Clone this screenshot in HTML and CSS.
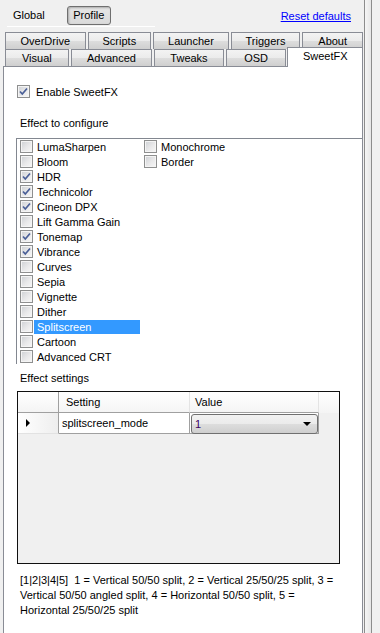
FILE: index.html
```html
<!DOCTYPE html>
<html lang="en">
<head>
    <meta charset="UTF-8">
    <meta name="viewport" content="width=device-width, initial-scale=1.0">
    <title>SweetFX settings</title>
    <link rel="stylesheet" href="styles.css">
</head>
<body>
<div class="window">
    <div class="main">
        <div class="topbar">
            <span class="mode">Global</span>
            <span class="mode active">Profile</span>
            <a href="#" class="reset">Reset defaults</a>
        </div>
        <div class="rule"></div>

        <div class="tabs">
            <div class="tabrow">
                <div class="tab w-overdrive">OverDrive</div>
                <div class="tab w-scripts">Scripts</div>
                <div class="tab w-launcher">Launcher</div>
                <div class="tab w-triggers">Triggers</div>
                <div class="tab w-about">About</div>
            </div>
            <div class="tabrow">
                <div class="tab w-visual">Visual</div>
                <div class="tab w-advanced">Advanced</div>
                <div class="tab w-tweaks">Tweaks</div>
                <div class="tab w-osd">OSD</div>
                <div class="tab w-sweetfx selected">SweetFX</div>
            </div>
        </div>

        <div class="page">
            <label class="enable">
                <span class="cb checked"><svg viewBox="0 0 11 11"><path d="M2 5.5 L4.3 8 L9 2.5"/></svg></span>
                Enable SweetFX
            </label>

            <div class="caption">Effect to configure</div>
            <div class="effects">
                <div class="col col-1">
                    <div class="item"><span class="cb"></span><span class="name">LumaSharpen</span></div>
                    <div class="item"><span class="cb"></span><span class="name">Bloom</span></div>
                    <div class="item"><span class="cb checked"><svg viewBox="0 0 11 11"><path d="M2 5.5 L4.3 8 L9 2.5"/></svg></span><span class="name">HDR</span></div>
                    <div class="item"><span class="cb checked"><svg viewBox="0 0 11 11"><path d="M2 5.5 L4.3 8 L9 2.5"/></svg></span><span class="name">Technicolor</span></div>
                    <div class="item"><span class="cb checked"><svg viewBox="0 0 11 11"><path d="M2 5.5 L4.3 8 L9 2.5"/></svg></span><span class="name">Cineon DPX</span></div>
                    <div class="item"><span class="cb"></span><span class="name">Lift Gamma Gain</span></div>
                    <div class="item"><span class="cb checked"><svg viewBox="0 0 11 11"><path d="M2 5.5 L4.3 8 L9 2.5"/></svg></span><span class="name">Tonemap</span></div>
                    <div class="item"><span class="cb checked"><svg viewBox="0 0 11 11"><path d="M2 5.5 L4.3 8 L9 2.5"/></svg></span><span class="name">Vibrance</span></div>
                    <div class="item"><span class="cb"></span><span class="name">Curves</span></div>
                    <div class="item"><span class="cb"></span><span class="name">Sepia</span></div>
                    <div class="item"><span class="cb"></span><span class="name">Vignette</span></div>
                    <div class="item"><span class="cb"></span><span class="name">Dither</span></div>
                    <div class="item"><span class="cb"></span><span class="name hl">Splitscreen</span></div>
                    <div class="item"><span class="cb"></span><span class="name">Cartoon</span></div>
                    <div class="item"><span class="cb"></span><span class="name">Advanced CRT</span></div>
                </div>
                <div class="col">
                    <div class="item"><span class="cb"></span><span class="name">Monochrome</span></div>
                    <div class="item"><span class="cb"></span><span class="name">Border</span></div>
                </div>
            </div>

            <div class="caption caption-settings">Effect settings</div>
            <div class="grid">
                <div class="grow head">
                    <div class="rowhead"></div>
                    <div class="cell c-setting">Setting</div>
                    <div class="cell c-value">Value</div>
                    <div class="cell c-fill"></div>
                </div>
                <div class="grow">
                    <div class="rowhead"><span class="arrow"></span></div>
                    <div class="cell c-setting body">splitscreen_mode</div>
                    <div class="cell c-value body">
                        <div class="combo"><span>1</span><span class="drop"></span></div>
                    </div>
                </div>
            </div>

            <p class="note">[1|2|3|4|5]&nbsp; 1 = Vertical 50/50 split, 2 = Vertical 25/50/25 split, 3 = Vertical 50/50 angled split, 4 = Horizontal 50/50 split, 5 = Horizontal 25/50/25 split</p>
        </div>
    </div>
    <div class="splitter"></div>
</div>
</body>
</html>
```

FILE: styles.css
```css
body {
    margin: 0;
    background-color: #f0f0f0;
    font-family: 'Liberation Sans', Arial, sans-serif;
    font-size: 11px;
    color: #000;
    overflow: hidden;
}

.window {
    display: flex;
    height: 633px;
}

.main {
    width: 363px;
    padding-left: 3px;
    box-sizing: border-box;
    display: flex;
    flex-direction: column;
}

/* top bar with Global / Profile */
.topbar {
    display: flex;
    align-items: center;
    height: 19px;
    margin-top: 6px;
}

.mode {
    margin-left: 10px;
    line-height: 17px;
}

.mode.active {
    margin-left: 22px;
    width: 44px;
    height: 19px;
    box-sizing: border-box;
    text-align: center;
    border: 1px solid #6f6f6f;
    border-radius: 3px;
    background: linear-gradient(#e6e6e6, #dadada);
    box-shadow: inset 1px 1px 2px rgba(0, 0, 0, 0.25);
}

.reset {
    margin-left: auto;
    margin-right: 12px;
    color: #0000ff;
}

.rule {
    height: 1px;
    width: 148px;
    margin: 1px 0 0 4px;
    background-color: #fff;
}

/* tabs */
.tabs {
    margin: 5px 0 0 2px;
}

.tabrow {
    display: flex;
    gap: 2px;
}

.tab {
    height: 17px;
    box-sizing: border-box;
    border: 1px solid #898c95;
    border-bottom: none;
    background: linear-gradient(#f3f3f3 0%, #ebebeb 50%, #dddddd 51%, #cfcfcf 100%);
    text-align: center;
    line-height: 16px;
}

.w-overdrive { width: 81px; }
.w-scripts { width: 64px; }
.w-launcher { width: 76px; }
.w-triggers { width: 70px; }
.w-about { width: 61px; }
.w-visual { width: 64px; }
.w-advanced { width: 82px; }
.w-tweaks { width: 70px; }
.w-osd { width: 61px; }

.w-sweetfx {
    width: 76px;
    margin-left: -1px;
}

.tab.selected {
    background: #fff;
    height: 20px;
    margin-top: -2px;
    margin-bottom: -1px;
    position: relative;
    z-index: 1;
    line-height: 17px;
}

/* tab page */
.page {
    flex: 1;
    border: 1px solid #898c95;
    border-bottom: none;
    background-color: #fff;
}

.enable {
    display: flex;
    align-items: center;
    gap: 6px;
    height: 13px;
    margin-top: 18px;
    padding-left: 13px;
}

.cb {
    width: 13px;
    height: 13px;
    box-sizing: border-box;
    border: 1px solid #8e8f8f;
    background: linear-gradient(135deg, #cdd0d4 0%, #e9e9ea 55%, #f7f7f7 100%);
    box-shadow: inset 0 0 0 1px #f4f4f4;
    flex-shrink: 0;
    display: flex;
}

.cb svg {
    width: 11px;
    height: 11px;
}

.cb path {
    fill: none;
    stroke: #4a5f97;
    stroke-width: 1.7;
}

.caption {
    margin-top: 19px;
    padding-left: 16px;
    height: 13px;
    line-height: 13px;
}

.effects {
    display: flex;
    margin: 8px 0 0 12px;
    height: 225px;
    border-top: 1px solid #828790;
    border-left: 1px solid #828790;
    overflow: hidden;
}

.col-1 {
    width: 124px;
}

.item {
    display: flex;
    align-items: center;
    height: 15px;
}

.item .cb {
    margin-left: 3px;
}

.name {
    flex: 1;
    height: 14px;
    line-height: 14px;
    margin: 0 1px;
    padding-left: 3px;
}

.col-1 .name {
    margin-right: 1px;
}

.name.hl {
    background-color: #3399ff;
    color: #fff;
}

.caption-settings {
    margin-top: 8px;
}

/* data grid */
.grid {
    margin: 6px 0 0 13px;
    width: 323px;
    height: 173px;
    box-sizing: border-box;
    border: 1px solid #101010;
    background-color: #f0f0f0;
}

.grow {
    display: flex;
    height: 21px;
}

.rowhead {
    width: 41px;
    box-sizing: border-box;
    border-right: 1px solid #a0a0a0;
    border-bottom: 1px solid #e2e2e2;
    background: linear-gradient(90deg, #ffffff, #eeeeee);
    display: flex;
    align-items: center;
}

.head {
    background: linear-gradient(#ffffff, #f4f4f4);
}

.head .rowhead {
    border-bottom: 1px solid #a0a0a0;
    background: linear-gradient(#ffffff, #f4f4f4);
}

.cell {
    box-sizing: border-box;
    border-bottom: 1px solid #a0a0a0;
    border-right: 1px solid #e4e4e4;
    line-height: 20px;
    padding-left: 7px;
}

.c-setting {
    width: 131px;
}

.c-value {
    width: 129px;
    padding-left: 5px;
}

.c-fill {
    flex: 1;
    border-right: none;
    border-bottom: none;
}

.cell.body {
    background-color: #fff;
    border-right: 1px solid #a0a0a0;
    padding-left: 3px;
}

.c-value.body {
    padding: 1px 0 0 1px;
}

.arrow {
    margin-left: 8px;
    width: 0;
    height: 0;
    border-top: 4px solid transparent;
    border-bottom: 4px solid transparent;
    border-left: 4px solid #000;
}

.combo {
    height: 20px;
    width: 127px;
    box-sizing: border-box;
    border: 1px solid #707070;
    border-radius: 3px;
    background: linear-gradient(#f2f2f2 0%, #ebebeb 50%, #dddddd 51%, #cfcfcf 100%);
    display: flex;
    align-items: center;
    padding-left: 3px;
    color: #3b0062;
    line-height: 18px;
}

.drop {
    margin-left: auto;
    margin-right: 6px;
    width: 0;
    height: 0;
    border-left: 4px solid transparent;
    border-right: 4px solid transparent;
    border-top: 4px solid #000;
}

.note {
    margin: 9px 0 0 16px;
    width: 318px;
    line-height: 15px;
}

.splitter {
    width: 8px;
    margin-left: 1px;
    box-sizing: border-box;
    border-left: 1px solid #8c8c8c;
    border-right: 1px solid #8c8c8c;
    background: linear-gradient(90deg, #f5f5f5, #e6e6e6);
}
```
